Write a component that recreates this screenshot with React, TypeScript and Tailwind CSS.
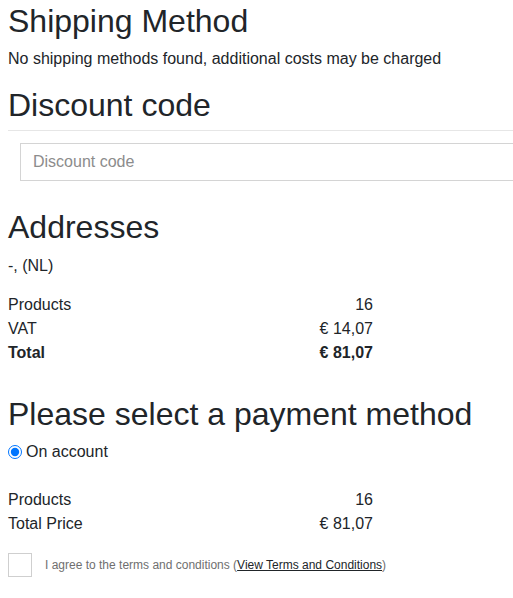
export default function App() {
  const summary = [
    { label: "Products", value: "16" },
    { label: "VAT", value: "€ 14,07" },
  ];

  return (
    <div className="w-[513px] h-[598px] overflow-hidden bg-white px-2 font-['Liberation_Sans',Arial,sans-serif] text-[#212529]">
      <h2 className="pt-0.5 text-[32px] leading-[1.2] mb-[7px]">Shipping Method</h2>
      <p className="text-base leading-6 mb-[15px]">
        No shipping methods found, additional costs may be charged
      </p>

      <h2 className="text-[32px] leading-[1.2]">Discount code</h2>
      <div className="mt-[5px] -mr-2 border-t border-[#e6e6e6]" />
      <div className="mt-3 pl-3">
        <input
          type="text"
          placeholder="Discount code"
          className="block w-[600px] h-[38px] px-3 text-base border border-[#d4d4d4] rounded-none outline-none placeholder:text-[#8c8c8c]"
        />
      </div>

      <h2 className="mt-[27px] text-[32px] leading-[1.2] mb-2">Addresses</h2>
      <p className="text-base leading-6 mb-[15px]">-, (NL)</p>

      <div className="w-[365px] text-base leading-6">
        {summary.map((row) => (
          <div key={row.label} className="flex justify-between">
            <span>{row.label}</span>
            <span>{row.value}</span>
          </div>
        ))}
        <div className="flex justify-between font-bold">
          <span>Total</span>
          <span>€ 81,07</span>
        </div>
      </div>

      <h2 className="mt-[30px] text-[32px] leading-[1.2] mb-[6px]">
        Please select a payment method
      </h2>
      <label className="flex items-center text-base leading-6">
        <input
          type="radio"
          name="payment"
          defaultChecked
          className="m-0 mr-1 size-[14px]"
        />
        <span>On account</span>
      </label>

      <div className="mt-6 w-[365px] text-base leading-6">
        <div className="flex justify-between">
          <span>Products</span>
          <span>16</span>
        </div>
        <div className="flex justify-between">
          <span>Total Price</span>
          <span>€ 81,07</span>
        </div>
      </div>

      <label className="mt-[17px] flex items-center">
        <span className="block size-6 border border-[#cfcfcf] bg-white" />
        <span className="ml-[13px] text-xs leading-[18px] text-[#6f6f6f]">
          I agree to the terms and conditions (
          <a href="#" className="underline text-[#212529]">
            View Terms and Conditions
          </a>
          )
        </span>
      </label>
    </div>
  );
}
